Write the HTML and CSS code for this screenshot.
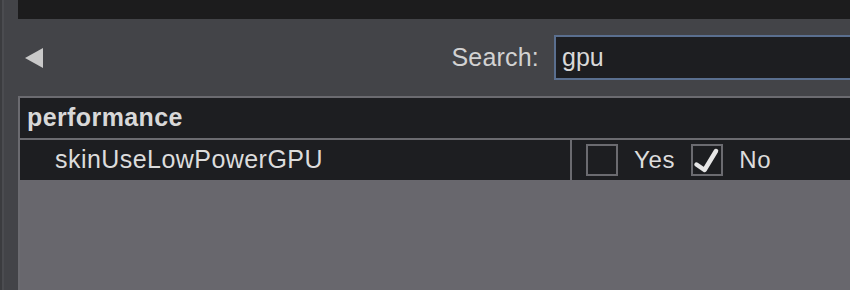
FILE: index.html
```html
<!DOCTYPE html>
<html lang="en">
<head>
    <meta charset="UTF-8">
    <meta name="viewport" content="width=device-width, initial-scale=1.0">
    <title>Settings - Search</title>
    <link rel="stylesheet" href="styles.css">
</head>
<body>

    <div class="app">
        <div class="side-strip"></div>

        <div class="main">
            <div class="top-bar"></div>

            <div class="toolbar">
                <button class="back-btn" aria-label="Back">
                    <svg width="18" height="20" viewBox="0 0 18 20">
                        <polygon points="18,0 18,20 0,10" fill="#c9c9c9"/>
                    </svg>
                </button>
                <label class="search-label" for="search">Search:</label>
                <input class="search-input" type="text" id="search" value="gpu">
            </div>

            <section class="settings-table">
                <div class="group-row">performance</div>
                <div class="setting-row">
                    <div class="setting-name">skinUseLowPowerGPU</div>
                    <div class="setting-value">
                        <span class="check-box"></span>
                        <span class="option-label">Yes</span>
                        <span class="check-box">
                            <svg width="28" height="28" viewBox="0 0 28 28">
                                <path d="M3.5 18.5 L11.5 24 L23 5" fill="none" stroke="#e6e6e6" stroke-width="4.5" stroke-linecap="round" stroke-linejoin="round"/>
                            </svg>
                        </span>
                        <span class="option-label">No</span>
                    </div>
                </div>
            </section>
        </div>
    </div>

</body>
</html>
```

FILE: styles.css
```css
/* General Page Styles */
body {
    margin: 0;
    padding: 0;
    background-color: #434448;
    font-family: "Liberation Sans", Arial, sans-serif;
    font-size: 25px;
    color: #d6d6d6;
    overflow: hidden;
}

.app {
    display: flex;
    width: 880px;
    height: 290px;
}

/* Left edge */
.side-strip {
    width: 2px;
    flex: none;
    background-color: #3b3c3f;
    border-right: 2px solid #4b4c50;
    margin-right: 14px;
}

.main {
    flex: 1;
    display: flex;
    flex-direction: column;
}

/* Top dark bar */
.top-bar {
    height: 19px;
    background-color: #1c1c1d;
}

/* Toolbar with search */
.toolbar {
    display: flex;
    align-items: center;
    padding: 16px 0 16px 0;
}

.back-btn {
    background: none;
    border: none;
    padding: 0;
    margin-left: 7px;
    display: flex;
    cursor: pointer;
}

.search-label {
    margin-left: auto;
    margin-right: 15px;
    color: #d2d2d2;
    font-size: 25px;
    letter-spacing: 0.2px;
}

.search-input {
    width: 316px;
    height: 41px;
    box-sizing: content-box;
    padding: 0 0 0 6px;
    margin: 0;
    border: 2px solid #5a6f8f;
    background-color: #1d1e21;
    color: #d8d8d8;
    font-family: "Liberation Sans", Arial, sans-serif;
    font-size: 25px;
    outline: none;
}

/* Settings table */
.settings-table {
    flex: 1;
    background-color: #68676d;
    border-top: 2px solid #6b6b70;
    border-left: 2px solid #6b6b70;
}

.group-row {
    height: 40px;
    line-height: 38px;
    padding-left: 7px;
    font-weight: bold;
    background-color: #1d1e21;
    border-bottom: 2px solid #6b6b70;
    color: #d8d8d8;
    letter-spacing: 0.4px;
}

.setting-row {
    display: grid;
    grid-template-columns: 552px 1fr;
    height: 40px;
    background-color: #1d1e21;
}

.setting-name {
    padding-left: 35px;
    line-height: 38px;
    border-right: 2px solid #6b6b70;
    letter-spacing: 0.45px;
    color: #dcdcdc;
}

.setting-value {
    display: flex;
    align-items: center;
    padding-left: 14px;
}

.check-box {
    width: 28px;
    height: 28px;
    border: 2px solid #6b6b70;
    display: flex;
    margin-right: 16px;
}

.option-label {
    margin-right: 16px;
    font-size: 24px;
    letter-spacing: 0.7px;
    color: #dcdcdc;
}
```
